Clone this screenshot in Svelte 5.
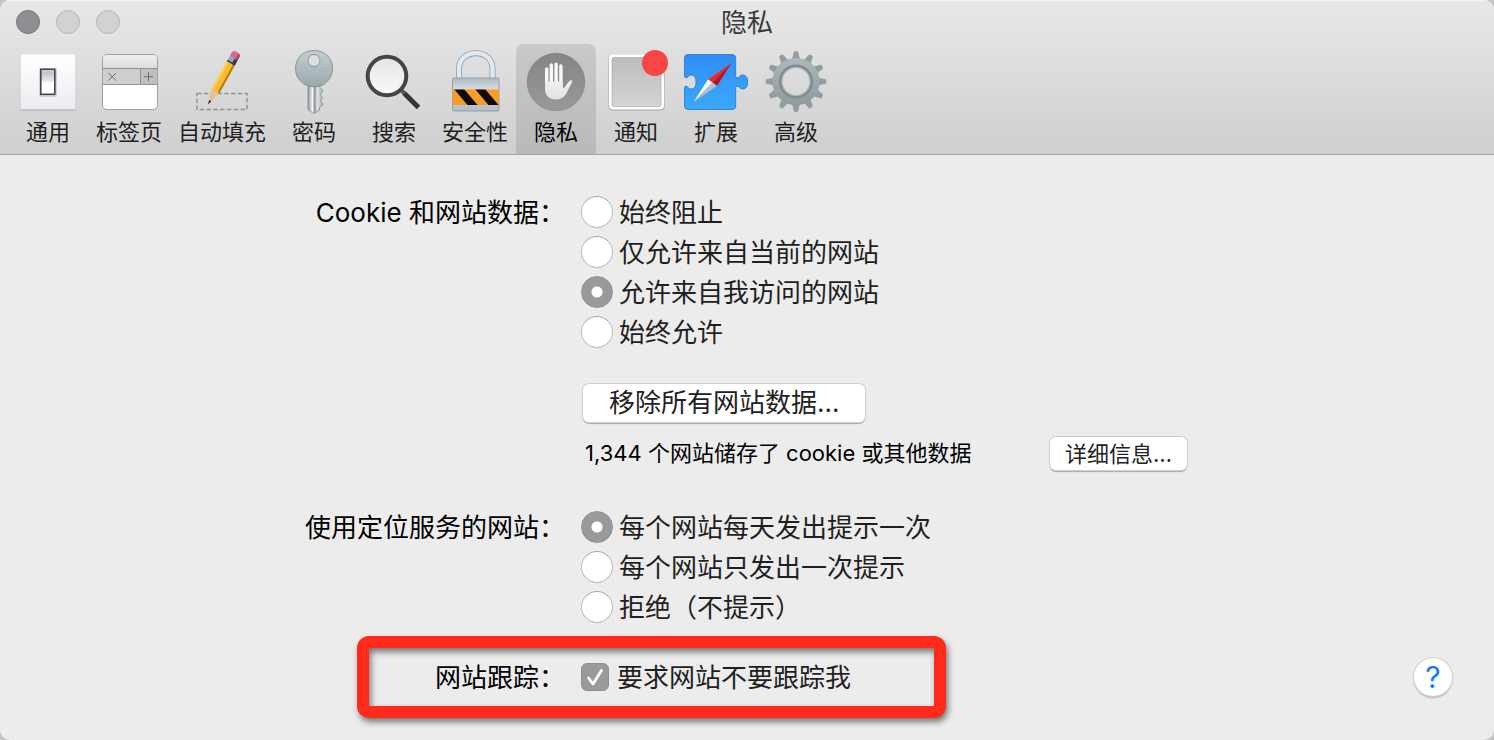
<script lang="ts">
  const tools = [
    { id: "general", label: "通用" },
    { id: "tabs", label: "标签页" },
    { id: "autofill", label: "自动填充" },
    { id: "passwords", label: "密码" },
    { id: "search", label: "搜索" },
    { id: "security", label: "安全性" },
    { id: "privacy", label: "隐私" },
    { id: "notifications", label: "通知" },
    { id: "extensions", label: "扩展" },
    { id: "advanced", label: "高级" },
  ];

  const cookieOptions = [
    "始终阻止",
    "仅允许来自当前的网站",
    "允许来自我访问的网站",
    "始终允许",
  ];

  const locationOptions = [
    "每个网站每天发出提示一次",
    "每个网站只发出一次提示",
    "拒绝（不提示）",
  ];

  let active = $state("privacy");
  let cookies = $state(cookieOptions[2]);
  let location = $state(locationOptions[0]);
  let doNotTrack = $state(true);

  // Gear teeth, one every 30 degrees
  const teeth = Array.from({ length: 12 }, (_, i) => i * 30);
</script>

<div class="window">
  <header>
    <div class="titlebar">
      <div class="lights">
        <button class="light close" aria-label="关闭"></button>
        <button class="light" aria-label="最小化"></button>
        <button class="light" aria-label="缩放"></button>
      </div>
      <h1>隐私</h1>
    </div>

    <nav class="toolbar">
      {#each tools as tool}
        <button
          class="tool"
          class:active={active === tool.id}
          onclick={() => (active = tool.id)}
        >
          <svg viewBox="0 0 64 64" aria-hidden="true">
            {#if tool.id === "general"}
              <defs>
                <linearGradient id="plate" x2="0" y2="1">
                  <stop offset="0" stop-color="#fff" />
                  <stop offset="1" stop-color="#ebecf1" />
                </linearGradient>
                <linearGradient id="rocker" x2="0" y2="1">
                  <stop offset="0" stop-color="#f4f4f5" />
                  <stop offset="0.1" stop-color="#c3c3c6" />
                  <stop offset="0.5" stop-color="#ececee" />
                  <stop offset="0.55" stop-color="#fff" />
                </linearGradient>
              </defs>
              <rect x="4.5" y="5" width="55" height="55.500" rx="1" fill="#a5a5a8" />
              <rect x="4.5" y="4.5" width="55" height="55" rx="1" fill="url(#plate)" />
              <rect x="23" y="18" width="18" height="29" rx="2" fill="#b9babf" opacity="0.6" />
              <rect x="24.8" y="19.3" width="14" height="25" fill="url(#rocker)" stroke="#46464c" stroke-width="1.6" />
            {:else if tool.id === "tabs"}
              <defs>
                <linearGradient id="tabtop" x2="0" y2="1">
                  <stop offset="0" stop-color="#f0f0f0" />
                  <stop offset="1" stop-color="#dcdcdc" />
                </linearGradient>
              </defs>
              <rect x="5.5" y="4.5" width="55" height="55" rx="4.5" fill="#fff" stroke="#a0a0a0" />
              <path d="M6 18V9a4 4 0 0 1 4-4h46a4 4 0 0 1 4 4v9z" fill="url(#tabtop)" />
              <path d="M6 18.5h54v16H6z" fill="#cfcfd0" />
              <path d="M44 18.5h16v16H44z" fill="#bfbfc0" />
              <path d="M6 18.5h54M6 34.5h54M43.5 18.5v16" stroke="#929292" />
              <path d="M11.5 23l7.5 7.5M19 23l-7.5 7.5M47 26.7h9M51.5 22.2v9" stroke="#6d6d6d" />
            {:else if tool.id === "autofill"}
              <rect x="7" y="43.5" width="50" height="16" fill="none" stroke="#929292" stroke-width="1.5" stroke-dasharray="4.5 2.3" />
              <g transform="translate(18 54.5) rotate(29)">
                <path d="M0 0L-4-15L0-17L4-15z" fill="#e9bf94" />
                <path d="M0 0L-1.2-4.5H1.2z" fill="#28211d" />
                <path d="M-4.500-15V-48H4.500V-15L1.5-16.5L-1.5-15z" fill="#f9bd2c" />
                <path d="M-4.500-15V-48H-2.500V-15.5z" fill="#fdd262" />
                <path d="M2.500-15.5V-48H4.500V-15z" fill="#b57c15" />
                <path d="M-4.500-53H4.500V-47H-4.500z" fill="#8fa9b8" />
                <path d="M1-53H4.500V-47H1z" fill="#2f3b45" />
                <path d="M-4.500-48.5H4.500V-47H-4.500z" fill="#34404a" />
                <path d="M-4.500-53V-57Q-4.500-60 0-60Q4.500-60 4.500-57V-53z" fill="#d56b91" />
                <path d="M2-53V-59.5Q4.500-59 4.500-57V-53z" fill="#a54668" />
              </g>
            {:else if tool.id === "passwords"}
              <defs>
                <linearGradient id="keyhead" x2="0" y2="1">
                  <stop offset="0" stop-color="#c2cdd0" />
                  <stop offset="1" stop-color="#9aa8ac" />
                </linearGradient>
                <linearGradient id="keyblade">
                  <stop offset="0" stop-color="#8f9699" />
                  <stop offset="0.3" stop-color="#f2f4f5" />
                  <stop offset="0.45" stop-color="#8b8f92" />
                  <stop offset="0.6" stop-color="#e2e4e6" />
                  <stop offset="1" stop-color="#a9adb0" />
                </linearGradient>
              </defs>
              <path
                d="M26 33V59.5L31.5 63.5L37.5 60V57.5L41 54.5L38.5 51L40.5 47.5L38 44.5L41 41L38 37.5V33z"
                fill="url(#keyblade)"
                stroke="#7f8587"
                stroke-width="0.8"
              />
              <path
                fill-rule="evenodd"
                d="M32 0.5C43 0.5 50.5 8 50.5 18.5C50.5 26.5 46 32 40 35.5Q32 38.5 24.5 35.5C18 32 13.5 26.5 13.5 18.5C13.5 8 21 0.5 32 0.5zM32 4.5a6 6 0 1 0 0 12a6 6 0 1 0 0-12z"
                fill="url(#keyhead)"
                stroke="#7b898e"
                stroke-width="0.8"
              />
            {:else if tool.id === "search"}
              <defs>
                <linearGradient id="lens" x2="0" y2="1">
                  <stop offset="0" stop-color="#e4e4e4" />
                  <stop offset="1" stop-color="#fafafa" />
                </linearGradient>
              </defs>
              <path d="M39 40L42 43" stroke="#555" stroke-width="4" />
              <path d="M42 43L56.5 57.5" stroke="#353535" stroke-width="5" />
              <circle cx="25" cy="26" r="19.3" fill="url(#lens)" stroke="#454545" stroke-width="4" />
            {:else if tool.id === "security"}
              <defs>
                <linearGradient id="lockbody" x2="0" y2="1">
                  <stop offset="0" stop-color="#aebbc3" />
                  <stop offset="0.3" stop-color="#d3d8dc" />
                  <stop offset="1" stop-color="#b4bdc6" />
                </linearGradient>
                <clipPath id="band"><path d="M9.5 39.5H56V55H9.5z" /></clipPath>
              </defs>
              <path d="M16 28V18.5C16-2 49.5-2 49.5 18.5V28" fill="none" stroke="#8b9fae" stroke-width="6" />
              <path d="M16 28V18.5C16-2 49.5-2 49.5 18.5V28" fill="none" stroke="#dfe9ef" stroke-width="4.4" />
              <rect x="9.5" y="28" width="46.5" height="33" rx="1.5" fill="url(#lockbody)" stroke="#8495a3" stroke-width="0.8" />
              <g clip-path="url(#band)">
                <path d="M9 39h48v16H9z" fill="#f79b2b" />
                <path d="M11 39h10l13.5 16h-10zM32 39h10l13.5 16h-10z" fill="#0d0b0a" />
              </g>
            {:else if tool.id === "privacy"}
              <defs>
                <linearGradient id="disc" x2="0" y2="1">
                  <stop offset="0" stop-color="#858585" />
                  <stop offset="1" stop-color="#999" />
                </linearGradient>
                <linearGradient id="hand" gradientUnits="userSpaceOnUse" x1="0" y1="12" x2="0" y2="50">
                  <stop offset="0" stop-color="#fff" />
                  <stop offset="1" stop-color="#e2e2e2" />
                </linearGradient>
              </defs>
              <circle cx="32" cy="32" r="28.8" fill="url(#disc)" stroke="#7b7b7b" stroke-width="0.6" />
              <path d="M22.7 19V36M27.3 15V36M32.1 14.2V36M36.9 16V38" fill="none" stroke="#f8f8f8" stroke-width="3.4" stroke-linecap="round" />
              <path
                d="M21 31.5H38.6V38.5C41.5 38 43 33 45.5 31C47.5 29.5 49 30.7 47.8 32.5L43 42C40.5 47.5 37 49.5 32 49.5C24.5 49.5 21 45 21 39z"
                fill="url(#hand)"
              />
            {:else if tool.id === "notifications"}
              <defs>
                <linearGradient id="note" x2="0" y2="1">
                  <stop offset="0" stop-color="#bcbcbf" />
                  <stop offset="1" stop-color="#d4d4d6" />
                </linearGradient>
              </defs>
              <rect x="4.5" y="4.8" width="56" height="55.7" rx="4" fill="#a4a4a4" />
              <rect x="5" y="4.5" width="55" height="55" rx="4" fill="#fff" />
              <rect x="8" y="7.5" width="49" height="49" rx="2" fill="url(#note)" stroke="#a2a2a4" stroke-width="0.6" />
              <circle cx="51" cy="13" r="13" fill="#f84545" />
            {:else if tool.id === "extensions"}
              <defs>
                <linearGradient id="puzzle" x2="0" y2="1">
                  <stop offset="0" stop-color="#2f8df3" />
                  <stop offset="1" stop-color="#3ba9fb" />
                </linearGradient>
              </defs>
              <path
                d="M4 4.5H48Q51.7 4.500 51.7 8V26.5Q52 28.5 54.5 27.5C56 25.5 58 24.8 59.5 25C62.5 25.5 63.800 28.5 63.800 32C63.800 35.500 62.5 38.500 59.5 39C58 39.2 56 38.500 54.5 36.5Q52 35.5 51.7 37.5V56Q51.7 59.5 48 59.5H4Q0.5 59.5 0.5 56V37.5Q0.8 35.5 3.3 36.5C4.5 38.5 6.5 39.2 8 39C11 38.5 12 35.5 12 32C12 28.5 11 25.5 8 25C6.5 24.8 4.5 25.5 3.3 27.5Q0.8 28.5 0.5 26.5V8Q0.5 4.5 4 4.5z"
                fill="url(#puzzle)"
                stroke="#2473c9"
                stroke-width="0.8"
              />
              <path d="M47.5 13L24 29.5L28.5 32.5z" fill="#f5262c" />
              <path d="M47.5 13L33 36L28.5 32.5z" fill="#b51822" />
              <path d="M9.5 52L24 29.5L28.5 32.5z" fill="#fff" />
              <path d="M9.5 52L33 36L28.5 32.5z" fill="#b7bec7" />
            {:else}
              <defs>
                <linearGradient id="gear" gradientUnits="userSpaceOnUse" x1="0" y1="0" x2="0" y2="63">
                  <stop offset="0" stop-color="#b2bdc0" />
                  <stop offset="1" stop-color="#8a9599" />
                </linearGradient>
              </defs>
              <g fill="#929da1">
                {#each teeth as angle}
                  <path d="M27 10Q29 8 29.5 2.5Q29.8 1 32 1Q34.200 1 34.5 2.5Q35 8 37 10z" transform="rotate({angle} 32 31.5)" />
                {/each}
              </g>
              <circle cx="32" cy="31.5" r="18.8" fill="none" stroke="url(#gear)" stroke-width="9.5" />
              <circle cx="32" cy="31.5" r="15.8" fill="none" stroke="#7f8b8f" stroke-width="2.6" />
              <circle cx="32" cy="31.5" r="14" fill="none" stroke="#aab5b8" stroke-width="1.2" />
            {/if}
          </svg>
          <span>{tool.label}</span>
        </button>
      {/each}
    </nav>
  </header>

  <main>
    <form onsubmit={(e) => e.preventDefault()}>
      <div class="label" id="cookie-label">Cookie 和网站数据：</div>
      <div class="options" role="radiogroup" aria-labelledby="cookie-label">
        {#each cookieOptions as option}
          <label>
            <input type="radio" name="cookies" value={option} bind:group={cookies} />
            {option}
          </label>
        {/each}
      </div>

      <div class="data">
        <button type="button" class="push large">移除所有网站数据…</button>
        <div class="status">
          <span>1,344 个网站储存了 cookie 或其他数据</span>
          <button type="button" class="push">详细信息…</button>
        </div>
      </div>

      <div class="label" id="location-label">使用定位服务的网站：</div>
      <div class="options" role="radiogroup" aria-labelledby="location-label">
        {#each locationOptions as option}
          <label>
            <input type="radio" name="location" value={option} bind:group={location} />
            {option}
          </label>
        {/each}
      </div>

      <div class="tracking">
        <div class="label" id="tracking-label">网站跟踪：</div>
        <label class="check">
          <input type="checkbox" bind:checked={doNotTrack} aria-describedby="tracking-label" />
          要求网站不要跟踪我
        </label>
        <div class="highlight"></div>
      </div>
    </form>

    <button class="help" aria-label="帮助">?</button>
  </main>
</div>

<style>
  :global(body) {
    background: #c4c4c4;
  }

  .window {
    min-height: 100vh;
    display: flex;
    flex-direction: column;
    background: #ececec;
    border-radius: 10px;
    overflow: hidden;
    color: #1f1f1f;
    font-family: Inter, "Noto Sans CJK SC", sans-serif;
    font-size: 26px;
    line-height: 40px;
  }

  button {
    font: inherit;
    color: inherit;
    padding: 0;
    border: none;
    background: none;
  }

  header {
    background: linear-gradient(#e8e8e8, #cfcfcf);
    border-bottom: 1px solid #a3a3a3;
    box-shadow: inset 0 1px #f5f5f5;
  }

  .titlebar {
    display: grid;
    grid-template-columns: 1fr auto 1fr;
    align-items: center;
    height: 44px;
    padding: 0 16px;
  }

  h1 {
    margin: 0;
    padding-top: 2px;
    font-size: 26px;
    font-weight: 400;
    color: #3a3a3a;
  }

  .lights {
    display: flex;
    gap: 16px;
  }

  .light {
    width: 24px;
    height: 24px;
    border: 1px solid #b5b5b5;
    border-radius: 50%;
    background: #d2d2d2;
  }

  .light.close {
    border-color: #77777a;
    background: #8e8e93;
  }

  .toolbar {
    display: flex;
    padding: 0 8px;
  }

  .tool {
    display: flex;
    flex-direction: column;
    align-items: center;
    min-width: 80px;
    padding: 6px 8px 4px;
    border-radius: 8px 8px 0 0;
    font-size: 22px;
    line-height: 36px;
  }

  .tool.active {
    background: linear-gradient(#c9c9c9, #b9b9b9);
    color: #000;
  }

  .tool svg {
    width: 64px;
    height: 64px;
  }

  main {
    display: grid;
    grid-template-columns: 1fr minmax(0, 884px) 1fr;
    flex: 1;
    padding: 38px 40px;
  }

  form {
    grid-column: 2;
    display: grid;
    grid-template-columns: 260px 1fr;
    column-gap: 16px;
    align-content: start;
  }

  .label {
    color: #000;
    text-align: right;
    white-space: nowrap;
  }

  .options label,
  .check {
    display: flex;
    align-items: center;
    gap: 6px;
    height: 40px;
  }

  .check {
    gap: 8px;
  }

  input {
    appearance: none;
    flex: none;
    margin: 0 0 2px;
    width: 32px;
    height: 32px;
    border: 1px solid #bdbdbd;
    border-top-color: #a9a9a9;
    border-radius: 50%;
    background: #fff;
  }

  input[type="radio"]:checked {
    border-color: #909094;
    background: radial-gradient(circle, #fff 5px, #9a9a9d 6px);
  }

  input[type="checkbox"] {
    width: 28px;
    height: 28px;
    border-radius: 6px;
  }

  input[type="checkbox"]:checked {
    border-color: #909094;
    background: #9a9a9d
      url('data:image/svg+xml,<svg xmlns="http://www.w3.org/2000/svg" viewBox="0 0 26 26"><path d="M6.5 14l4.5 6L19.5 6.5" fill="none" stroke="white" stroke-width="2.8" stroke-linecap="round" stroke-linejoin="round"/></svg>');
  }

  .data {
    grid-column: 2;
    padding: 31px 2px 35px;
  }

  .push {
    height: 33px;
    padding: 0 15px;
    border-radius: 6px;
    background: #fff;
    box-shadow:
      0 0 0 1px #cfcfcf,
      0 2px 1px #aaa;
    color: #222;
    font-size: 22px;
    line-height: 34px;
  }

  .push.large {
    display: block;
    height: 38px;
    padding: 0 26px;
    font-size: 26px;
    line-height: 38px;
  }

  .status {
    display: flex;
    align-items: center;
    justify-content: space-between;
    margin-top: 11px;
    padding-left: 2px;
    color: #000;
    font-size: 22px;
  }

  .tracking {
    position: relative;
    grid-column: 1 / -1;
    display: grid;
    grid-template-columns: subgrid;
    margin-top: 30px;
  }

  .highlight {
    position: absolute;
    top: -22px;
    left: 52px;
    width: 565px;
    height: 58px;
    border: 12px solid #ff2a1c;
    border-radius: 12px;
    filter: drop-shadow(2px 4px 3px rgba(0, 0, 0, 0.5));
    pointer-events: none;
  }

  .help {
    grid-column: 3;
    justify-self: end;
    align-self: end;
    width: 38px;
    height: 38px;
    margin: 0 2px 6px 0;
    border-radius: 50%;
    background: #fff;
    box-shadow:
      0 0 0 1px #d0d0d0,
      0 2px 2px #aaa;
    color: #0f7bf5;
    font-size: 30px;
    line-height: 38px;
  }
</style>
